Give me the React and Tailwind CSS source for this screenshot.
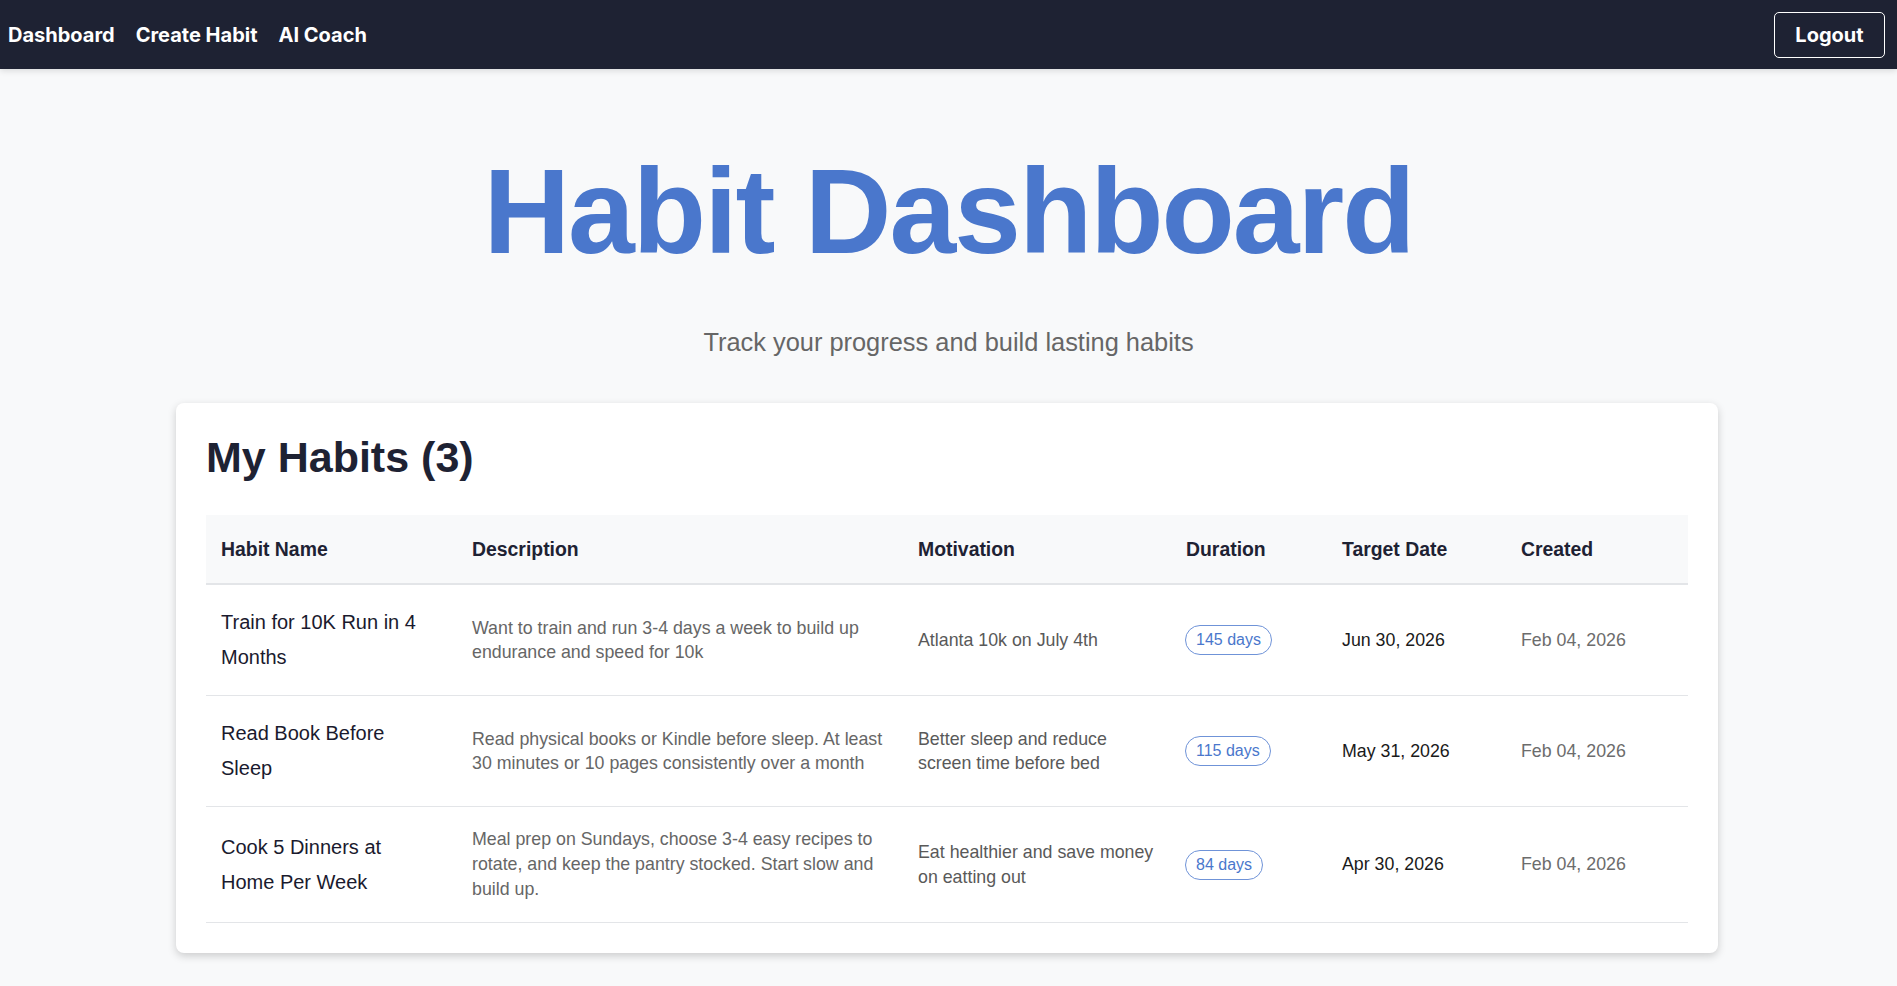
import React from "react";

const habits = [
  {
    name: "Train for 10K Run in 4 Months",
    description: "Want to train and run 3-4 days a week to build up endurance and speed for 10k",
    motivation: "Atlanta 10k on July 4th",
    duration: "145 days",
    target: "Jun 30, 2026",
    created: "Feb 04, 2026",
  },
  {
    name: "Read Book Before Sleep",
    description: "Read physical books or Kindle before sleep. At least 30 minutes or 10 pages consistently over a month",
    motivation: "Better sleep and reduce screen time before bed",
    duration: "115 days",
    target: "May 31, 2026",
    created: "Feb 04, 2026",
  },
  {
    name: "Cook 5 Dinners at Home Per Week",
    description: "Meal prep on Sundays, choose 3-4 easy recipes to rotate, and keep the pantry stocked. Start slow and build up.",
    motivation: "Eat healthier and save money on eatting out",
    duration: "84 days",
    target: "Apr 30, 2026",
    created: "Feb 04, 2026",
  },
];

const headers = ["Habit Name", "Description", "Motivation", "Duration", "Target Date", "Created"];

const App = () => {
  return (
    <div className="min-h-screen bg-[#f8f9fa] font-['Liberation_Sans',Arial,sans-serif]">
      {/* Navbar */}
      <nav className="h-[69px] bg-[#1e2233] flex items-center justify-between pl-[8px] pr-[12px] shadow-[0_2px_6px_rgba(0,0,0,0.12)] font-['Inter',sans-serif]">
        <div className="flex items-center gap-[21px] text-white font-bold text-[20px]">
          <a href="#">Dashboard</a>
          <a href="#">Create Habit</a>
          <a href="#">AI Coach</a>
        </div>
        <button className="w-[111px] h-[46px] border-[1.5px] border-white rounded-[5px] text-white font-bold text-[20px]">
          Logout
        </button>
      </nav>

      <main className="pt-[73px] pb-[32px]">
        {/* Hero */}
        <h1 className="text-center text-[120px] leading-[1.15] font-bold tracking-[-2px] text-[#4a77cc]">
          Habit Dashboard
        </h1>
        <p className="mt-[47px] text-center text-[25.4px] leading-[30px] text-[#666]">
          Track your progress and build lasting habits
        </p>

        {/* Habits card */}
        <div className="w-[1542px] ml-[176px] mt-[46px] bg-white rounded-[8px] shadow-[0_3px_8px_rgba(0,0,0,0.18)] p-[30px]">
          <h2 className="text-[43px] leading-[1.15] font-bold text-[#1e2233] mb-[33px]">
            My Habits ({habits.length})
          </h2>

          <table className="w-full table-fixed border-collapse">
            <colgroup>
              <col className="w-[251px]" />
              <col className="w-[446px]" />
              <col className="w-[268px]" />
              <col className="w-[156px]" />
              <col className="w-[179px]" />
              <col className="w-[182px]" />
            </colgroup>
            <thead>
              <tr className="bg-[#f8f9fa] border-b-2 border-[#e3e5e8]">
                {headers.map((h) => (
                  <th
                    key={h}
                    className="text-left pl-[15px] pr-[8px] py-[20px] text-[19.4px] leading-[28px] font-bold text-[#1e2233]"
                  >
                    {h}
                  </th>
                ))}
              </tr>
            </thead>
            <tbody>
              {habits.map((habit) => (
                <tr key={habit.name} className="border-b border-[#e3e5e8]">
                  <td className="pl-[15px] pr-[20px] py-[20px] align-middle text-[20px] leading-[35px] text-[#1a1a2e]">
                    {habit.name}
                  </td>
                  <td className="pl-[15px] pr-[10px] py-[20px] align-middle text-[17.8px] leading-[24.9px] text-[#666]">
                    {habit.description}
                  </td>
                  <td className="pl-[15px] pr-[9px] py-[20px] align-middle text-[17.8px] leading-[24.9px] text-[#595959]">
                    {habit.motivation}
                  </td>
                  <td className="pl-[14px] pr-[8px] py-[20px] align-middle">
                    <span className="inline-block border border-[#6f93d8] rounded-full px-[10px] py-[3px] text-[16px] leading-[22px] text-[#4a77cc]">
                      {habit.duration}
                    </span>
                  </td>
                  <td className="pl-[15px] pr-[8px] py-[20px] align-middle text-[17.8px] text-[#1a1a1a]">
                    {habit.target}
                  </td>
                  <td className="pl-[15px] pr-[8px] py-[20px] align-middle text-[17.8px] text-[#6c6c6c]">
                    {habit.created}
                  </td>
                </tr>
              ))}
            </tbody>
          </table>
        </div>
      </main>
    </div>
  );
};

export default App;
